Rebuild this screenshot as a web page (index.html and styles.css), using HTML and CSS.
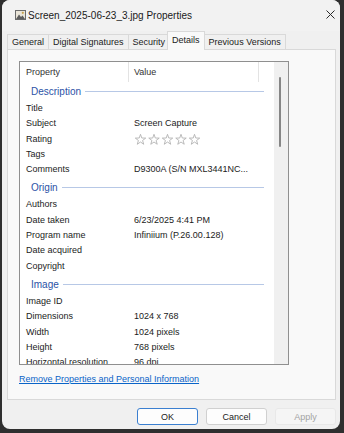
FILE: index.html
```html
<!DOCTYPE html>
<html lang="en">
<head>
    <meta charset="UTF-8">
    <meta name="viewport" content="width=device-width, initial-scale=1.0">
    <title>Screen_2025-06-23_3.jpg Properties</title>
    <link rel="stylesheet" href="styles.css">
</head>
<body>
    <div class="window">
        <div class="titlebar">
            <svg class="file-icon" width="11" height="10" viewBox="0 0 11 10">
                <rect x="0.5" y="0.5" width="10" height="9" fill="#e9e4d8" stroke="#6b6b6b"/>
                <path d="M1 9 L4 4.5 L6 7 L7.5 5.5 L10 9 Z" fill="#5d5d5d"/>
                <circle cx="7.8" cy="2.8" r="1.1" fill="#c9a24a"/>
            </svg>
            <span class="title">Screen_2025-06-23_3.jpg Properties</span>
            <svg class="close" width="9" height="9" viewBox="0 0 9 9">
                <path d="M0.5 0.5 L8.5 8.5 M8.5 0.5 L0.5 8.5" stroke="#2b2b2b" stroke-width="1"/>
            </svg>
        </div>

        <div class="tabs">
            <div class="tab">General</div>
            <div class="tab">Digital Signatures</div>
            <div class="tab">Security</div>
            <div class="tab active">Details</div>
            <div class="tab">Previous Versions</div>
        </div>

        <div class="panel">
            <div class="list">
                <div class="list-body">
                    <div class="list-head">
                        <div class="head-prop">Property</div>
                        <div class="head-val">Value</div>
                    </div>

                    <div class="group first">Description</div>
                    <div class="row"><span class="prop">Title</span><span class="val"></span></div>
                    <div class="row"><span class="prop">Subject</span><span class="val">Screen Capture</span></div>
                    <div class="row">
                        <span class="prop">Rating</span>
                        <span class="val">
                            <svg class="stars" width="70" height="13" viewBox="0 0 70 13">
                                <g fill="none" stroke="#b3b3b3" stroke-width="0.9">
                                    <polygon transform="translate(6.5 6.8)" points="0,-5.5 1.29,-1.78 5.23,-1.7 2.09,0.68 3.23,4.45 0,2.2 -3.23,4.45 -2.09,0.68 -5.23,-1.7 -1.29,-1.78"/>
                                    <polygon transform="translate(20 6.8)" points="0,-5.5 1.29,-1.78 5.23,-1.7 2.09,0.68 3.23,4.45 0,2.2 -3.23,4.45 -2.09,0.68 -5.23,-1.7 -1.29,-1.78"/>
                                    <polygon transform="translate(33.5 6.8)" points="0,-5.5 1.29,-1.78 5.23,-1.7 2.09,0.68 3.23,4.45 0,2.2 -3.23,4.45 -2.09,0.68 -5.23,-1.7 -1.29,-1.78"/>
                                    <polygon transform="translate(47 6.8)" points="0,-5.5 1.29,-1.78 5.23,-1.7 2.09,0.68 3.23,4.45 0,2.2 -3.23,4.45 -2.09,0.68 -5.23,-1.7 -1.29,-1.78"/>
                                    <polygon transform="translate(60.5 6.8)" points="0,-5.5 1.29,-1.78 5.23,-1.7 2.09,0.68 3.23,4.45 0,2.2 -3.23,4.45 -2.09,0.68 -5.23,-1.7 -1.29,-1.78"/>
                                </g>
                            </svg>
                        </span>
                    </div>
                    <div class="row"><span class="prop">Tags</span><span class="val"></span></div>
                    <div class="row"><span class="prop">Comments</span><span class="val">D9300A (S/N MXL3441NC...</span></div>

                    <div class="group">Origin</div>
                    <div class="row"><span class="prop">Authors</span><span class="val"></span></div>
                    <div class="row"><span class="prop">Date taken</span><span class="val">6/23/2025 4:41 PM</span></div>
                    <div class="row"><span class="prop">Program name</span><span class="val">Infiniium (P.26.00.128)</span></div>
                    <div class="row"><span class="prop">Date acquired</span><span class="val"></span></div>
                    <div class="row"><span class="prop">Copyright</span><span class="val"></span></div>

                    <div class="group">Image</div>
                    <div class="row"><span class="prop">Image ID</span><span class="val"></span></div>
                    <div class="row"><span class="prop">Dimensions</span><span class="val">1024 x 768</span></div>
                    <div class="row"><span class="prop">Width</span><span class="val">1024 pixels</span></div>
                    <div class="row"><span class="prop">Height</span><span class="val">768 pixels</span></div>
                    <div class="row"><span class="prop">Horizontal resolution</span><span class="val">96 dpi</span></div>
                </div>
                <div class="scrollbar"><div class="thumb"></div></div>
            </div>

            <a class="link" href="#">Remove Properties and Personal Information</a>
        </div>

        <div class="buttons">
            <button class="btn default">OK</button>
            <button class="btn">Cancel</button>
            <button class="btn disabled">Apply</button>
        </div>
    </div>
</body>
</html>
```

FILE: styles.css
```css
body {
    margin: 0;
    background: #2f2f2f;
    font-family: "Liberation Sans", Arial, sans-serif;
    font-size: 9px;
    color: #1b1b1b;
}

.window {
    margin-left: 2px;
    width: 338px;
    height: 429px;
    background: #f0f0f0;
    border-radius: 8px;
    overflow: hidden;
    display: flex;
    flex-direction: column;
}

.titlebar {
    height: 31px;
    box-sizing: border-box;
    display: flex;
    align-items: center;
    padding: 0 5px 0 13px;
    background: #f2f2f2;
}

.file-icon {
    margin-top: -2px;
}

.title {
    font-size: 10px;
    margin-left: 2px;
    color: #1a1a1a;
}

.close {
    margin-left: auto;
    margin-top: -3px;
}

/* tab strip */
.tabs {
    display: flex;
    align-items: flex-end;
    height: 18px;
    padding-left: 5px;
    position: relative;
    z-index: 1;
}

.tab {
    height: 15px;
    box-sizing: border-box;
    padding: 1px 4px 0;
    line-height: 13px;
    border: 1px solid #d9d9d9;
    border-bottom: none;
    margin-right: -1px;
    white-space: nowrap;
}

.tab.active {
    height: 19px;
    margin: 0 -1px -1px -2px;
    padding: 2px 4px 0;
    background: #f9f9f9;
    position: relative;
    z-index: 2;
}

.panel {
    margin: 0 4px 0 5px;
    height: 351px;
    box-sizing: border-box;
    border: 1px solid #d9d9d9;
    background: #f9f9f9;
    padding: 11px 0 0 11px;
}

/* property list */
.list {
    width: 270px;
    height: 304px;
    box-sizing: border-box;
    border: 1px solid #8f8f8f;
    background: #fff;
    display: flex;
}

.list-body {
    flex: 1;
    overflow: hidden;
}

.list-head {
    display: flex;
    height: 20px;
    line-height: 21px;
    color: #333;
}

.head-prop {
    width: 109px;
    box-sizing: border-box;
    padding-left: 6px;
    border-right: 1px solid #e3e3e3;
}

.head-val {
    width: 130px;
    box-sizing: border-box;
    padding-left: 5px;
    border-right: 1px solid #e3e3e3;
}

.group {
    display: flex;
    align-items: center;
    height: 19px;
    margin-top: 1px;
    padding: 0 10px 0 11px;
    font-size: 10px;
    color: #2b52a6;
}

.group.first {
    margin-top: 0;
}

.group::after {
    content: "";
    flex: 1;
    height: 1px;
    margin-left: 4px;
    background: #b7c8e6;
}

.row {
    display: flex;
    height: 15.3px;
    line-height: 15.3px;
    white-space: nowrap;
}

.prop {
    width: 109px;
    box-sizing: border-box;
    padding-left: 6px;
    flex-shrink: 0;
}

.val {
    padding-left: 5px;
    display: flex;
    align-items: center;
}

.scrollbar {
    width: 14px;
    background: #f0f0f0;
    position: relative;
}

.thumb {
    position: absolute;
    left: 5px;
    top: 15px;
    width: 2px;
    height: 70px;
    border-radius: 1px;
    background: #868686;
}

.link {
    display: inline-block;
    margin-top: 8px;
    line-height: 12px;
    color: #0a64c8;
    text-decoration: underline;
}

/* dialog buttons */
.buttons {
    display: flex;
    justify-content: flex-end;
    gap: 8px;
    padding: 8px 4px 0 0;
}

.btn {
    width: 61px;
    height: 17px;
    padding: 0;
    box-sizing: border-box;
    border: 1px solid #d0d0d0;
    border-radius: 3px;
    background: #fdfdfd;
    font-family: "Liberation Sans", Arial, sans-serif;
    font-size: 9px;
    color: #1b1b1b;
}

.btn.default {
    border-color: #3b7fd0;
}

.btn.disabled {
    background: #f5f5f5;
    border-color: #e8e8e8;
    color: #a3a3a3;
}
```
